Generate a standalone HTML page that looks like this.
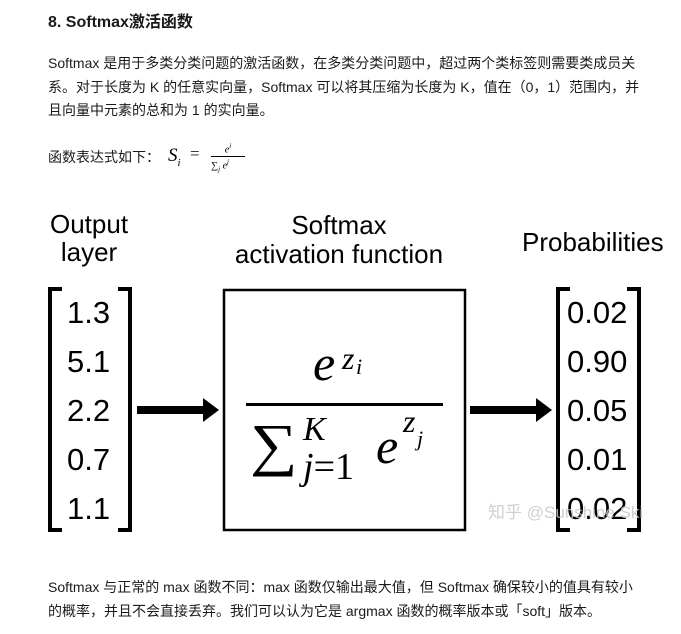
<!DOCTYPE html>
<html><head><meta charset="utf-8"><style>
body{margin:0;width:681px;height:634px;background:#fff;position:relative;overflow:hidden;font-family:"Liberation Sans","Noto Sans CJK SC",sans-serif;color:#1a1a1a}
.a{position:absolute;white-space:nowrap}
.p{font-size:14px;line-height:23.5px;left:48px}
.d{font-family:"Liberation Sans",sans-serif;color:#000}
.n{font-size:31px;left:67px}
.m{font-size:31px;left:567px}
.br{position:absolute;border:4px solid #000;width:10px;top:287px;height:237px}
.ser{font-family:"Liberation Serif","DejaVu Serif",serif;font-style:italic;color:#000;line-height:1}
.up{font-style:normal}
</style></head><body>
<div class="a" style="left:48px;top:8px;font-size:16px;font-weight:bold">8. Softmax激活函数</div>
<div class="a p" style="top:52px">Softmax 是用于多类分类问题的激活函数，在多类分类问题中，超过两个类标签则需要类成员关<br>系。对于长度为 K 的任意实向量，Softmax 可以将其压缩为长度为 K，值在（0，1）范围内，并<br>且向量中元素的总和为 1 的实向量。</div>
<div class="a p" style="top:146px">函数表达式如下：</div>
<div class="a ser" style="left:168px;top:146px;font-size:19px">S<sub style="font-size:11px">i</sub></div>
<div class="a" style="left:190px;top:144px;font-size:17px;font-family:'Liberation Serif',serif">=</div>
<div class="a ser" style="left:213px;top:143px;font-size:10px;width:30px;text-align:center">e<sup style="font-size:7px">i</sup></div>
<div class="a" style="left:211px;top:156px;width:34px;border-top:1px solid #000"></div>
<div class="a ser" style="left:211px;top:159px;font-size:10px"><span class="up">∑</span><sub style="font-size:7px">j</sub> e<sup style="font-size:7px">j</sup></div>

<div class="a d" style="left:50px;top:210px;font-size:26px;line-height:28px;text-align:center">Output<br>layer</div>
<div class="a d" style="left:231px;top:211px;font-size:26px;line-height:29px;text-align:center;width:216px">Softmax<br>activation function</div>
<div class="a d" style="left:522px;top:227px;font-size:26px">Probabilities</div>

<div class="br" style="left:48px;border-right:none"></div>
<div class="br" style="left:118px;border-left:none"></div>
<div class="a d n" style="top:295px">1.3</div>
<div class="a d n" style="top:344px">5.1</div>
<div class="a d n" style="top:393px">2.2</div>
<div class="a d n" style="top:442px">0.7</div>
<div class="a d n" style="top:491px">1.1</div>

<div class="br" style="left:556px;border-right:none"></div>
<div class="br" style="left:627px;border-left:none"></div>
<div class="a d m" style="top:295px">0.02</div>
<div class="a d m" style="top:344px">0.90</div>
<div class="a d m" style="top:393px">0.05</div>
<div class="a d m" style="top:442px">0.01</div>
<div class="a d m" style="top:491px">0.02</div>

<svg class="a" style="left:0;top:0" width="681" height="634">
<rect x="137" y="406" width="68" height="8" fill="#000"/><polygon points="203,398 219,410 203,422" fill="#000"/>
<rect x="470" y="406" width="68" height="8" fill="#000"/><polygon points="536,398 552,410 536,422" fill="#000"/>
<rect x="224" y="290" width="241" height="240" fill="none" stroke="#000" stroke-width="2.5"/>
<rect x="246" y="403" width="197" height="3" fill="#000"/>
</svg>
<!-- numerator -->
<div class="a ser" style="left:313px;top:338px;font-size:50px">e</div>
<div class="a ser" style="left:342px;top:342px;font-size:32px">z</div>
<div class="a ser" style="left:356px;top:356px;font-size:22px">i</div>
<!-- denominator -->
<div class="a ser up" style="left:250px;top:416px;font-size:58px;transform:scaleX(1.15);transform-origin:left">∑</div>
<div class="a ser" style="left:303px;top:413px;font-size:34px">K</div>
<div class="a ser" style="left:303px;top:448px;font-size:38px">j<span class="up">=1</span></div>
<div class="a ser" style="left:376px;top:421px;font-size:50px">e</div>
<div class="a ser" style="left:403px;top:405px;font-size:32px">z</div>
<div class="a ser" style="left:417px;top:428px;font-size:22px">j</div>
<div class="a" style="left:488px;top:498px;font-size:17px;color:rgba(200,200,200,0.85)">知乎 @Sunshine Ski</div>

<div class="a p" style="top:576px">Softmax 与正常的 max 函数不同：max 函数仅输出最大值，但 Softmax 确保较小的值具有较小<br>的概率，并且不会直接丢弃。我们可以认为它是 argmax 函数的概率版本或「soft」版本。</div>
</body></html>
